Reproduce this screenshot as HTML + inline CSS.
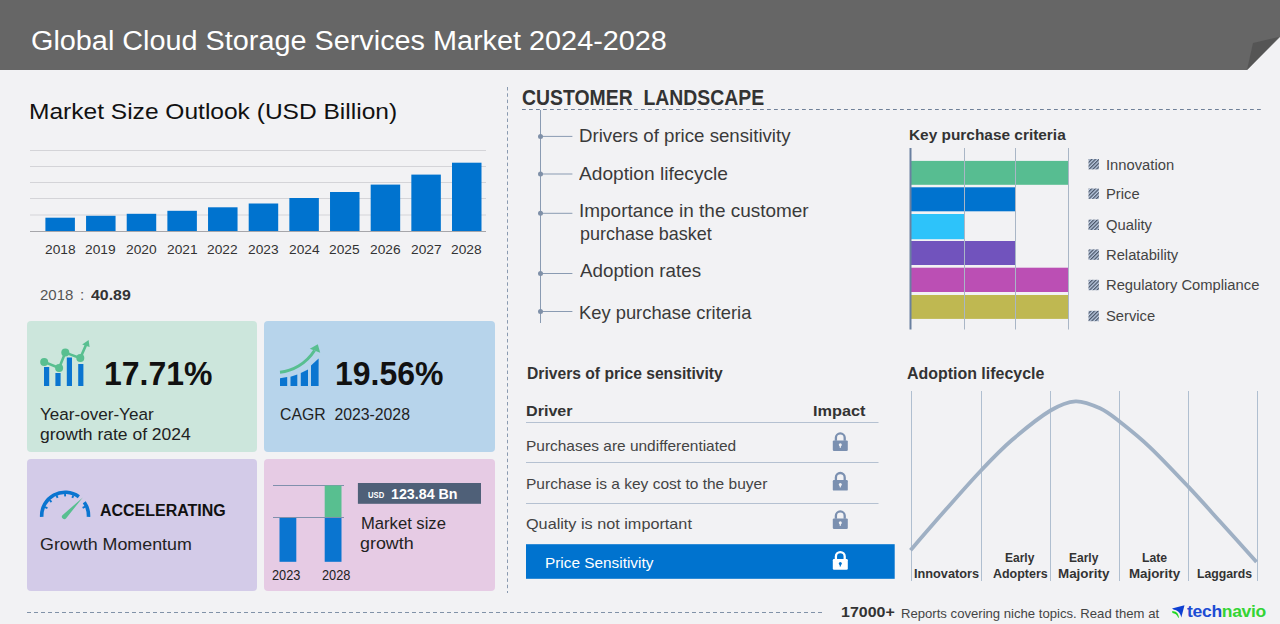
<!DOCTYPE html>
<html><head><meta charset="utf-8"><style>
html,body{margin:0;padding:0;}
body{width:1280px;height:624px;overflow:hidden;background:#f2f2f4;position:relative;font-family:"Liberation Sans",sans-serif;}
.t{position:absolute;white-space:pre;line-height:1;transform-origin:0 0;font-family:"Liberation Sans",sans-serif;}
.card{position:absolute;border-radius:4px;}
svg{position:absolute;left:0;top:0;}
</style></head><body>
<svg width="1280" height="624" viewBox="0 0 1280 624">
<defs>
<pattern id="hatch" patternUnits="userSpaceOnUse" width="2.6" height="2.6" patternTransform="rotate(45)">
<rect width="2.6" height="2.6" fill="#bccbe2"/><rect width="1.25" height="2.6" fill="#475366"/>
</pattern>
</defs>
<polygon points="0,0 1280,0 1280,37 1247,70 0,70" fill="#666666"/>
<polygon points="1247,70 1253,43 1279,37" fill="#555555"/>
<line x1="30" y1="150.5" x2="486" y2="150.5" stroke="#d4d4d8" stroke-width="1"/>
<line x1="30" y1="166.5" x2="486" y2="166.5" stroke="#d4d4d8" stroke-width="1"/>
<line x1="30" y1="182.5" x2="486" y2="182.5" stroke="#d4d4d8" stroke-width="1"/>
<line x1="30" y1="198.5" x2="486" y2="198.5" stroke="#d4d4d8" stroke-width="1"/>
<line x1="30" y1="215.0" x2="486" y2="215.0" stroke="#d4d4d8" stroke-width="1"/>
<rect x="45.40" y="217.7" width="29.5" height="13.30" fill="#0073cf"/>
<rect x="86.06" y="215.8" width="29.5" height="15.20" fill="#0073cf"/>
<rect x="126.72" y="213.8" width="29.5" height="17.20" fill="#0073cf"/>
<rect x="167.38" y="210.8" width="29.5" height="20.20" fill="#0073cf"/>
<rect x="208.04" y="207.3" width="29.5" height="23.70" fill="#0073cf"/>
<rect x="248.70" y="203.5" width="29.5" height="27.50" fill="#0073cf"/>
<rect x="289.36" y="198.0" width="29.5" height="33.00" fill="#0073cf"/>
<rect x="330.02" y="192.0" width="29.5" height="39.00" fill="#0073cf"/>
<rect x="370.68" y="184.6" width="29.5" height="46.40" fill="#0073cf"/>
<rect x="411.34" y="174.6" width="29.5" height="56.40" fill="#0073cf"/>
<rect x="452.00" y="162.7" width="29.5" height="68.30" fill="#0073cf"/>
<line x1="30" y1="231.5" x2="486" y2="231.5" stroke="#a6a6aa" stroke-width="1"/>
</svg>
<div class="card" style="left:27px;top:321px;width:230px;height:131px;background:#cce6dc"></div>
<div class="card" style="left:264px;top:321px;width:231px;height:131px;background:#b7d4eb"></div>
<div class="card" style="left:27px;top:459px;width:230px;height:132px;background:#d3cbe8"></div>
<div class="card" style="left:264px;top:459px;width:231px;height:132px;background:#e6cbe4"></div>
<svg width="1280" height="624" viewBox="0 0 1280 624">
<defs>
<pattern id="hatch2" patternUnits="userSpaceOnUse" width="2.6" height="2.6" patternTransform="rotate(45)">
<rect width="2.6" height="2.6" fill="#bccbe2"/><rect width="1.25" height="2.6" fill="#475366"/>
</pattern>
</defs>
<!-- icon1 -->
<g>
<rect x="44" y="367" width="5.2" height="19" fill="#0a75d0"/>
<rect x="55.4" y="373" width="5.2" height="13" fill="#0a75d0"/>
<rect x="66.8" y="357.5" width="5.2" height="28.5" fill="#0a75d0"/>
<rect x="78.2" y="364" width="5.2" height="22" fill="#0a75d0"/>
<polyline points="44.2,361.9 59.1,368 65.3,352.6 80.3,358.1 86.2,344.5" fill="none" stroke="#58bf90" stroke-width="2.6"/>
<circle cx="44.2" cy="361.9" r="4" fill="#58bf90"/>
<circle cx="59.1" cy="368" r="4" fill="#58bf90"/>
<circle cx="65.3" cy="352.6" r="4" fill="#58bf90"/>
<circle cx="80.3" cy="358.1" r="4" fill="#58bf90"/>
<polygon points="88.6,340 82.2,344.6 89.6,347" fill="#58bf90"/>
</g>
<!-- icon2 -->
<g>
<polygon points="280,378.2 287.2,377 287.2,386 280,386" fill="#0a75d0"/>
<polygon points="290.5,376.8 297.3,374.6 297.3,386 290.5,386" fill="#0a75d0"/>
<polygon points="300.8,373 308,369.6 308,386 300.8,386" fill="#0a75d0"/>
<polygon points="311,365.5 318.6,358.4 318.6,386 311,386" fill="#0a75d0"/>
<path d="M280 372.3 C292 371 306 364 314.5 350.5" fill="none" stroke="#58bf90" stroke-width="3"/>
<polygon points="317.8,344.2 309.8,348.8 320.2,352.8" fill="#58bf90"/>
</g>
<!-- gauge -->
<g>
<path d="M41.73 516.82 A23.4 23.4 0 0 1 78.85 496.67" fill="none" stroke="#0a75d0" stroke-width="3.6"/>
<path d="M84.27 502.18 A23.4 23.4 0 0 1 88.47 516.82" fill="none" stroke="#0a75d0" stroke-width="3.6"/>
<line x1="44.94" y1="507.04" x2="47.43" y2="508.10" stroke="#0a75d0" stroke-width="1.9"/><line x1="49.61" y1="500.11" x2="51.52" y2="502.02" stroke="#0a75d0" stroke-width="1.9"/><line x1="56.54" y1="495.44" x2="57.60" y2="497.93" stroke="#0a75d0" stroke-width="1.9"/><line x1="65.10" y1="493.70" x2="65.10" y2="496.40" stroke="#0a75d0" stroke-width="1.9"/><line x1="73.30" y1="495.29" x2="72.29" y2="497.80" stroke="#0a75d0" stroke-width="1.9"/><line x1="85.11" y1="506.69" x2="82.64" y2="507.79" stroke="#0a75d0" stroke-width="1.9"/>
<path d="M62.4 515.2 L82.8 497.4 L66.2 518.2 A2.2 2.2 0 0 1 62.4 515.2 Z" fill="#58bf90"/>
</g>
<!-- mini chart -->
<g>
<line x1="273" y1="485.5" x2="344" y2="485.5" stroke="#8090ac" stroke-width="1"/>
<rect x="324.7" y="485.5" width="16.8" height="32" fill="#58bf90"/>
<rect x="279.5" y="517.5" width="16.8" height="44.3" fill="#0a75d0"/>
<rect x="324.7" y="517.5" width="16.8" height="44.3" fill="#0a75d0"/>
<line x1="273" y1="517.5" x2="344" y2="517.5" stroke="#8090ac" stroke-width="1"/>
<rect x="357.9" y="483" width="123.1" height="20.8" fill="#4f6078"/>
</g>
<!-- divider -->
<line x1="507.5" y1="87" x2="507.5" y2="593" stroke="#8a9ab0" stroke-width="1" stroke-dasharray="3.5 2.8"/>
<line x1="522" y1="109.5" x2="1262" y2="109.5" stroke="#6f8098" stroke-width="1" stroke-dasharray="3.8 3.2"/>
<line x1="27" y1="612.5" x2="823" y2="612.5" stroke="#8192a8" stroke-width="1" stroke-dasharray="4 3"/>
<line x1="540.5" y1="110" x2="540.5" y2="323" stroke="#8a9bb2" stroke-width="1"/>
<line x1="540" y1="136.4" x2="572.4" y2="136.4" stroke="#8a9bb2" stroke-width="1"/>
<circle cx="540.5" cy="136.4" r="2.5" fill="#7f90a8"/>
<line x1="540" y1="174.0" x2="572.4" y2="174.0" stroke="#8a9bb2" stroke-width="1"/>
<circle cx="540.5" cy="174.0" r="2.5" fill="#7f90a8"/>
<line x1="540" y1="213.3" x2="572.4" y2="213.3" stroke="#8a9bb2" stroke-width="1"/>
<circle cx="540.5" cy="213.3" r="2.5" fill="#7f90a8"/>
<line x1="540" y1="273.5" x2="572.4" y2="273.5" stroke="#8a9bb2" stroke-width="1"/>
<circle cx="540.5" cy="273.5" r="2.5" fill="#7f90a8"/>
<line x1="540" y1="311.5" x2="572.4" y2="311.5" stroke="#8a9bb2" stroke-width="1"/>
<circle cx="540.5" cy="311.5" r="2.5" fill="#7f90a8"/>
<rect x="910" y="160.9" width="158.5" height="23.9" fill="#57bd91"/>
<rect x="910" y="187.3" width="105.2" height="24.0" fill="#0073cf"/>
<rect x="910" y="214.0" width="54.4" height="25.2" fill="#2dc3fa"/>
<rect x="910" y="241.0" width="105.2" height="24.0" fill="#7153bd"/>
<rect x="910" y="267.7" width="158.5" height="24.3" fill="#bb4fb4"/>
<rect x="910" y="295.0" width="158.5" height="23.9" fill="#bfb851"/>
<line x1="964.5" y1="148" x2="964.5" y2="329.5" stroke="#a9b6c6" stroke-width="1"/>
<line x1="1015.5" y1="148" x2="1015.5" y2="329.5" stroke="#a9b6c6" stroke-width="1"/>
<line x1="1068.5" y1="148" x2="1068.5" y2="329.5" stroke="#a9b6c6" stroke-width="1"/>
<line x1="910.5" y1="148" x2="910.5" y2="329.5" stroke="#6a80a0" stroke-width="2"/>
<rect x="1088.5" y="159.0" width="10.4" height="10.4" fill="url(#hatch)"/>
<rect x="1088.5" y="188.5" width="10.4" height="10.4" fill="url(#hatch)"/>
<rect x="1088.5" y="219.6" width="10.4" height="10.4" fill="url(#hatch)"/>
<rect x="1088.5" y="249.4" width="10.4" height="10.4" fill="url(#hatch)"/>
<rect x="1088.5" y="279.8" width="10.4" height="10.4" fill="url(#hatch)"/>
<rect x="1088.5" y="310.8" width="10.4" height="10.4" fill="url(#hatch)"/>
<line x1="526" y1="422.5" x2="878.5" y2="422.5" stroke="#b5c1d1" stroke-width="1"/>
<line x1="526" y1="462.5" x2="878.5" y2="462.5" stroke="#b5c1d1" stroke-width="1"/>
<line x1="526" y1="503.5" x2="878.5" y2="503.5" stroke="#b5c1d1" stroke-width="1"/>
<rect x="526" y="544.2" width="368.7" height="34.6" fill="#0073cf"/>
<g transform="translate(832.6,432.2)"><path d="M3.3 8.5 V5.6 A4.4 4.4 0 0 1 12.1 5.6 V8.5" fill="none" stroke="#7b90b0" stroke-width="2.3"/><rect x="0.2" y="8.2" width="15" height="10.6" rx="1.2" fill="#7b90b0"/><circle cx="7.7" cy="12.6" r="1.5" fill="#f2f2f4"/><rect x="7.1" y="12.6" width="1.2" height="3" fill="#f2f2f4"/></g>
<g transform="translate(832.6,471.8)"><path d="M3.3 8.5 V5.6 A4.4 4.4 0 0 1 12.1 5.6 V8.5" fill="none" stroke="#7b90b0" stroke-width="2.3"/><rect x="0.2" y="8.2" width="15" height="10.6" rx="1.2" fill="#7b90b0"/><circle cx="7.7" cy="12.6" r="1.5" fill="#f2f2f4"/><rect x="7.1" y="12.6" width="1.2" height="3" fill="#f2f2f4"/></g>
<g transform="translate(832.6,510.2)"><path d="M3.3 8.5 V5.6 A4.4 4.4 0 0 1 12.1 5.6 V8.5" fill="none" stroke="#7b90b0" stroke-width="2.3"/><rect x="0.2" y="8.2" width="15" height="10.6" rx="1.2" fill="#7b90b0"/><circle cx="7.7" cy="12.6" r="1.5" fill="#f2f2f4"/><rect x="7.1" y="12.6" width="1.2" height="3" fill="#f2f2f4"/></g>
<g transform="translate(832.6,550.9)"><path d="M3.3 8.5 V5.6 A4.4 4.4 0 0 1 12.1 5.6 V8.5" fill="none" stroke="#ffffff" stroke-width="2.3"/><rect x="0.2" y="8.2" width="15" height="10.6" rx="1.2" fill="#ffffff"/><circle cx="7.7" cy="12.6" r="1.5" fill="#0073cf"/><rect x="7.1" y="12.6" width="1.2" height="3" fill="#0073cf"/></g>
<line x1="911.5" y1="391" x2="911.5" y2="581" stroke="#b0bfd0" stroke-width="1"/>
<line x1="981.5" y1="391" x2="981.5" y2="581" stroke="#b0bfd0" stroke-width="1"/>
<line x1="1050.5" y1="391" x2="1050.5" y2="581" stroke="#b0bfd0" stroke-width="1"/>
<line x1="1119.5" y1="391" x2="1119.5" y2="581" stroke="#b0bfd0" stroke-width="1"/>
<line x1="1188.5" y1="391" x2="1188.5" y2="581" stroke="#b0bfd0" stroke-width="1"/>
<line x1="1257.5" y1="391" x2="1257.5" y2="581" stroke="#b0bfd0" stroke-width="1"/>
<path d="M910.5 550.2 C916.2 543.6 933.2 523.8 945.0 510.5 C956.8 497.2 970.1 481.9 981.3 470.2 C992.5 458.4 1000.5 449.9 1012.0 440.0 C1023.5 430.1 1039.9 416.9 1050.5 410.5 C1061.1 404.1 1067.2 401.7 1075.5 401.3 C1083.8 400.9 1092.7 404.9 1100.0 408.3 C1107.3 411.7 1111.2 415.0 1119.5 421.5 C1127.8 428.0 1138.5 436.4 1150.0 447.3 C1161.5 458.2 1176.8 474.5 1188.5 486.9 C1200.2 499.3 1208.7 509.0 1220.0 521.5 C1231.3 534.0 1250.4 555.2 1256.5 562.0" fill="none" stroke="#9fb0c4" stroke-width="3.8" stroke-linecap="butt" stroke-linejoin="round"/>
<!-- logo -->
<g>
<path d="M1172 608.6 L1184.5 605.3 L1181.3 617.6 C1180.6 613.5 1178.5 610.5 1174 609.8 Z" fill="#0d3fd2"/>
<path d="M1172.2 611.1 C1175.5 611.4 1178.4 612.5 1179 617.8 L1178.3 617.8 C1177 614.5 1175 613.2 1172.4 612.9 Z" fill="#22d822"/>
</g>
</svg>
<div class="t" style="left:30.93px;top:26.33px;font-size:28.2px;font-weight:400;color:#ffffff;transform:scaleX(1.0222)">Global Cloud Storage Services Market 2024-2028</div>
<div class="t" style="left:29.42px;top:101.25px;font-size:22.5px;font-weight:400;color:#111111;transform:scaleX(1.0904)">Market Size Outlook (USD Billion)</div>
<div class="t" style="left:40.21px;top:287.03px;font-size:15.2px;font-weight:400;color:#555555;transform:scaleX(0.9875)">2018</div>
<div class="t" style="left:80.10px;top:287.03px;font-size:15.2px;font-weight:400;color:#555555;transform:scaleX(1.0000)">:</div>
<div class="t" style="left:90.70px;top:286.53px;font-size:15.2px;font-weight:700;color:#333333;transform:scaleX(1.0447)">40.89</div>
<div class="t" style="left:104.29px;top:356.84px;font-size:33.5px;font-weight:700;color:#111111;transform:scaleX(0.9541)">17.71%</div>
<div class="t" style="left:40.05px;top:405.80px;font-size:16.3px;font-weight:400;color:#222222;transform:scaleX(1.0486)">Year-over-Year</div>
<div class="t" style="left:40.03px;top:425.60px;font-size:16.3px;font-weight:400;color:#222222;transform:scaleX(1.0748)">growth rate of 2024</div>
<div class="t" style="left:335.09px;top:356.84px;font-size:33.5px;font-weight:700;color:#111111;transform:scaleX(0.9541)">19.56%</div>
<div class="t" style="left:279.73px;top:406.20px;font-size:16.3px;font-weight:400;color:#222222;transform:scaleX(0.9699)">CAGR  2023-2028</div>
<div class="t" style="left:100.28px;top:502.07px;font-size:17.4px;font-weight:700;color:#111111;transform:scaleX(0.9185)">ACCELERATING</div>
<div class="t" style="left:39.90px;top:536.00px;font-size:16.3px;font-weight:400;color:#222222;transform:scaleX(1.0971)">Growth Momentum</div>
<div class="t" style="left:272.09px;top:567.95px;font-size:14.0px;font-weight:400;color:#222222;transform:scaleX(0.9133)">2023</div>
<div class="t" style="left:321.79px;top:567.95px;font-size:14.0px;font-weight:400;color:#222222;transform:scaleX(0.9133)">2028</div>
<div class="t" style="left:368.00px;top:489.79px;font-size:9.7px;font-weight:700;color:#ffffff;transform:scaleX(0.7900)">USD</div>
<div class="t" style="left:390.55px;top:486.10px;font-size:15.0px;font-weight:700;color:#ffffff;transform:scaleX(0.9500)">123.84 Bn</div>
<div class="t" style="left:360.50px;top:515.86px;font-size:16.7px;font-weight:400;color:#222222;transform:scaleX(0.9952)">Market size</div>
<div class="t" style="left:360.43px;top:535.66px;font-size:16.7px;font-weight:400;color:#222222;transform:scaleX(1.0708)">growth</div>
<div class="t" style="left:522.10px;top:87.80px;font-size:21.5px;font-weight:700;color:#333333;transform:scaleX(0.9026)">CUSTOMER  LANDSCAPE</div>
<div class="t" style="left:579.47px;top:126.89px;font-size:18.2px;font-weight:400;color:#3a3a3a;transform:scaleX(1.0259)">Drivers of price sensitivity</div>
<div class="t" style="left:579.30px;top:164.79px;font-size:18.2px;font-weight:400;color:#3a3a3a;transform:scaleX(1.0525)">Adoption lifecycle</div>
<div class="t" style="left:579.32px;top:201.89px;font-size:18.2px;font-weight:400;color:#3a3a3a;transform:scaleX(1.0422)">Importance in the customer</div>
<div class="t" style="left:580.21px;top:224.89px;font-size:18.2px;font-weight:400;color:#3a3a3a;transform:scaleX(0.9872)">purchase basket</div>
<div class="t" style="left:580.40px;top:261.59px;font-size:18.2px;font-weight:400;color:#3a3a3a;transform:scaleX(1.0325)">Adoption rates</div>
<div class="t" style="left:579.39px;top:303.59px;font-size:18.2px;font-weight:400;color:#3a3a3a;transform:scaleX(1.0088)">Key purchase criteria</div>
<div class="t" style="left:909.27px;top:126.70px;font-size:15.0px;font-weight:700;color:#333333;transform:scaleX(1.0270)">Key purchase criteria</div>
<div class="t" style="left:526.60px;top:366.11px;font-size:15.7px;font-weight:700;color:#333333;transform:scaleX(0.9979)">Drivers of price sensitivity</div>
<div class="t" style="left:526.33px;top:403.20px;font-size:15.0px;font-weight:700;color:#333333;transform:scaleX(1.0738)">Driver</div>
<div class="t" style="left:813.31px;top:403.20px;font-size:15.0px;font-weight:700;color:#333333;transform:scaleX(1.0851)">Impact</div>
<div class="t" style="left:526.34px;top:438.94px;font-size:14.6px;font-weight:400;color:#444444;transform:scaleX(1.0589)">Purchases are undifferentiated</div>
<div class="t" style="left:526.34px;top:477.14px;font-size:14.6px;font-weight:400;color:#444444;transform:scaleX(1.0624)">Purchase is a key cost to the buyer</div>
<div class="t" style="left:526.29px;top:516.64px;font-size:14.6px;font-weight:400;color:#444444;transform:scaleX(1.1115)">Quality is not important</div>
<div class="t" style="left:545.05px;top:555.74px;font-size:14.6px;font-weight:400;color:#ffffff;transform:scaleX(1.0520)">Price Sensitivity</div>
<div class="t" style="left:906.95px;top:366.21px;font-size:16.0px;font-weight:700;color:#333333;transform:scaleX(0.9964)">Adoption lifecycle</div>
<div class="t" style="left:914.33px;top:566.61px;font-size:13.1px;font-weight:700;color:#333333;transform:scaleX(0.9712)">Innovators</div>
<div class="t" style="left:1005.28px;top:550.51px;font-size:13.1px;font-weight:700;color:#333333;transform:scaleX(0.9161)">Early</div>
<div class="t" style="left:993.30px;top:566.61px;font-size:13.1px;font-weight:700;color:#333333;transform:scaleX(0.9509)">Adopters</div>
<div class="t" style="left:1069.28px;top:550.51px;font-size:13.1px;font-weight:700;color:#333333;transform:scaleX(0.9161)">Early</div>
<div class="t" style="left:1058.28px;top:566.61px;font-size:13.1px;font-weight:700;color:#333333;transform:scaleX(1.0224)">Majority</div>
<div class="t" style="left:1142.47px;top:550.51px;font-size:13.1px;font-weight:700;color:#333333;transform:scaleX(0.9346)">Late</div>
<div class="t" style="left:1129.48px;top:566.61px;font-size:13.1px;font-weight:700;color:#333333;transform:scaleX(1.0184)">Majority</div>
<div class="t" style="left:1197.36px;top:566.61px;font-size:13.1px;font-weight:700;color:#333333;transform:scaleX(0.9362)">Laggards</div>
<div class="t" style="left:840.86px;top:605.26px;font-size:14.7px;font-weight:700;color:#333333;transform:scaleX(1.0865)">17000+</div>
<div class="t" style="left:901.39px;top:606.70px;font-size:13.0px;font-weight:400;color:#444444;transform:scaleX(1.0090)">Reports covering niche topics. Read them at</div>
<div class="t" style="left:1106.24px;top:156.55px;font-size:15.3px;font-weight:400;color:#444444;transform:scaleX(0.9646)">Innovation</div>
<div class="t" style="left:1106.24px;top:186.05px;font-size:15.3px;font-weight:400;color:#444444;transform:scaleX(0.9646)">Price</div>
<div class="t" style="left:1106.24px;top:217.15px;font-size:15.3px;font-weight:400;color:#444444;transform:scaleX(0.9646)">Quality</div>
<div class="t" style="left:1106.24px;top:246.95px;font-size:15.3px;font-weight:400;color:#444444;transform:scaleX(0.9646)">Relatability</div>
<div class="t" style="left:1106.24px;top:277.35px;font-size:15.3px;font-weight:400;color:#444444;transform:scaleX(0.9646)">Regulatory Compliance</div>
<div class="t" style="left:1106.24px;top:308.35px;font-size:15.3px;font-weight:400;color:#444444;transform:scaleX(0.9646)">Service</div>
<div class="t" style="left:44.69px;top:242.69px;font-size:13.6px;font-weight:400;color:#333333;transform:scaleX(1.0103)">2018</div>
<div class="t" style="left:85.35px;top:242.69px;font-size:13.6px;font-weight:400;color:#333333;transform:scaleX(1.0103)">2019</div>
<div class="t" style="left:126.01px;top:242.69px;font-size:13.6px;font-weight:400;color:#333333;transform:scaleX(1.0103)">2020</div>
<div class="t" style="left:166.67px;top:242.69px;font-size:13.6px;font-weight:400;color:#333333;transform:scaleX(1.0103)">2021</div>
<div class="t" style="left:207.33px;top:242.69px;font-size:13.6px;font-weight:400;color:#333333;transform:scaleX(1.0103)">2022</div>
<div class="t" style="left:247.99px;top:242.69px;font-size:13.6px;font-weight:400;color:#333333;transform:scaleX(1.0103)">2023</div>
<div class="t" style="left:288.65px;top:242.69px;font-size:13.6px;font-weight:400;color:#333333;transform:scaleX(1.0103)">2024</div>
<div class="t" style="left:329.31px;top:242.69px;font-size:13.6px;font-weight:400;color:#333333;transform:scaleX(1.0103)">2025</div>
<div class="t" style="left:369.97px;top:242.69px;font-size:13.6px;font-weight:400;color:#333333;transform:scaleX(1.0103)">2026</div>
<div class="t" style="left:410.63px;top:242.69px;font-size:13.6px;font-weight:400;color:#333333;transform:scaleX(1.0103)">2027</div>
<div class="t" style="left:451.29px;top:242.69px;font-size:13.6px;font-weight:400;color:#333333;transform:scaleX(1.0103)">2028</div>
<div class="t" style="left:1187.3px;top:602.8px;font-size:17px;font-weight:700;color:#1d4cd4;letter-spacing:-0.3px;transform:scaleX(1.03)">tech<span style="color:#34d434">navio</span></div>
</body></html>
